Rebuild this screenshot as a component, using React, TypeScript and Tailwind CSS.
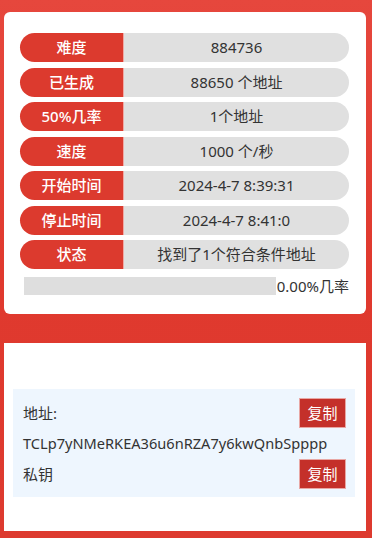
import React from "react";

type Row = { label: string; value: string };

const rows: Row[] = [
  { label: "难度", value: "884736" },
  { label: "已生成", value: "88650 个地址" },
  { label: "50%几率", value: "1个地址" },
  { label: "速度", value: "1000 个/秒" },
  { label: "开始时间", value: "2024-4-7 8:39:31" },
  { label: "停止时间", value: "2024-4-7 8:41:0" },
  { label: "状态", value: "找到了1个符合条件地址" },
];

const font = { fontFamily: '"Noto Sans", "Noto Sans CJK SC", sans-serif' };

function CopyButton() {
  return (
    <button className="w-[47px] h-[30px] bg-[#c4302a] border border-[#e8a7a4] text-white text-[15px] leading-none">
      复制
    </button>
  );
}

export default function App() {
  return (
    <div
      className="w-[372px] h-[538px] bg-gradient-to-b from-[#e6473d] via-[#e0392e] to-[#dd3a2f] pl-[4px] pt-[12px] text-[#333]"
      style={font}
    >
      {/* stats card */}
      <div className="w-[362px] h-[302px] bg-white rounded-md pt-[21px] pl-[16px] pr-[17px]">
        <div className="flex flex-col gap-[5.5px]">
          {rows.map((r) => (
            <div key={r.label} className="flex h-[29px] text-[15px]">
              <div className="w-[104px] flex items-center justify-center bg-[#dc3a2e] rounded-l-full border-r border-[#f0a9a4] text-white font-medium">
                {r.label}
              </div>
              <div className="flex-1 flex items-center justify-center bg-[#e0e0e0] rounded-r-full">
                {r.value}
              </div>
            </div>
          ))}
        </div>
        <div className="flex items-center mt-[6px] pl-[4px]">
          <div className="flex-1 h-[18px] bg-[#dedede]"></div>
          <div className="text-[15px] pl-[1px]">0.00%几率</div>
        </div>
      </div>

      {/* result card */}
      <div className="w-[362px] mt-[29px] h-[188px] bg-white pt-[46px] pl-[9px] pr-[11px]">
        <div className="h-[108px] bg-[#eef6fe] pl-[10px] pr-[9px] pt-[9px] text-[15px]">
          <div className="flex items-center justify-between h-[30px]">
            <span>地址:</span>
            <CopyButton />
          </div>
          <div className="h-[31px] flex items-center text-[14.6px]">TCLp7yNMeRKEA36u6nRZA7y6kwQnbSpppp</div>
          <div className="flex items-center justify-between h-[30px]">
            <span>私钥</span>
            <CopyButton />
          </div>
        </div>
      </div>
    </div>
  );
}
